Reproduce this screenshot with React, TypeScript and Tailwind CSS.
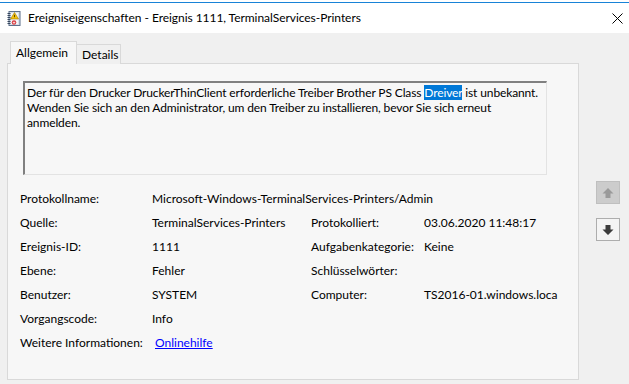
import React from 'react';

const font = { fontFamily: 'Lato, "Noto Sans", sans-serif' };

function TitleIcon() {
  return (
    <svg width="14" height="15" viewBox="0 0 14 15" className="shrink-0">
      <rect x="2" y="0.5" width="11" height="14" fill="#d8e0ea" stroke="#5b6f8a" />
      <rect x="4" y="2" width="7" height="11" fill="#f4f6f9" />
      {[2, 4, 6, 8, 10, 12].map((y) => (
        <rect key={y} x="0.5" y={y} width="3" height="1" fill="#36465e" />
      ))}
      <polygon points="7.5,1.5 11.5,8 3.5,8" fill="#f4c20d" stroke="#a07a00" strokeWidth="0.6" />
      <rect x="7.1" y="3.8" width="0.8" height="2.4" fill="#3a2a00" />
      <circle cx="7" cy="11.5" r="2.3" fill="#d9343a" />
      <rect x="5.8" y="10.8" width="2.4" height="1.6" fill="#f3d0d0" />
    </svg>
  );
}

function ArrowIcon({ dir, color }: { dir: 'up' | 'down'; color: string }) {
  return (
    <svg width="12" height="12" viewBox="0 0 12 12">
      <g transform={dir === 'down' ? 'rotate(180 6 6)' : undefined}>
        <polygon points="6,1 11.5,6.5 8.5,6.5 8.5,11 3.5,11 3.5,6.5 0.5,6.5" fill={color} />
      </g>
    </svg>
  );
}

const rows: [string, React.ReactNode, string?, string?][] = [
  ['Quelle:', 'TerminalServices-Printers', 'Protokolliert:', '03.06.2020 11:48:17'],
  ['Ereignis-ID:', '1111', 'Aufgabenkategorie:', 'Keine'],
  ['Ebene:', 'Fehler', 'Schlüsselwörter:', ''],
  ['Benutzer:', 'SYSTEM', 'Computer:', 'TS2016-01.windows.loca'],
  ['Vorgangscode:', 'Info'],
];

export default function App() {
  return (
    <div className="w-[629px] h-[384px] overflow-hidden bg-[#f0f0f0] text-[12px] text-black" style={font}>
      {/* Title bar */}
      <div className="h-[33px] bg-white flex flex-col">
        <div className="h-[2px]" />
        <div className="h-px bg-[#1883d7]" />
        <div className="flex-1 flex items-center pl-[7px] pr-[6px]">
          <TitleIcon />
          <span className="ml-[7px] text-[12px] tracking-[-0.05px]">Ereigniseigenschaften - Ereignis 1111, TerminalServices-Printers</span>
          <svg width="11" height="11" viewBox="0 0 11 11" className="ml-auto">
            <path d="M0.5 0.5 L10.5 10.5 M10.5 0.5 L0.5 10.5" stroke="#000" strokeWidth="1" />
          </svg>
        </div>
      </div>

      <div className="flex">
        {/* Tab control */}
        <div className="ml-[7px] w-[572px]">
          <div className="mt-[8px] h-[23px] flex items-end pl-[3px]">
            <div className="relative z-10 w-[67px] h-[23px] border border-b-0 border-[#d9d9d9] bg-[#f7f7f7] pl-[5px] pt-[2px]">
              Allgemein
            </div>
            <div className="-ml-px w-[45px] h-[20px] border border-b-0 border-[#d9d9d9] bg-[#f0f0f0] pl-[5px] pt-[1px]">
              Details
            </div>
          </div>
          <div className="-mt-px h-[317px] border border-[#d9d9d9] bg-[#f7f7f7] pl-[12px] pt-[17px]">
            <div className="ml-[3px] w-[524px] h-[94px] border-t-2 border-l-2 border-t-[#808080] border-l-[#808080] border-r border-b border-r-[#e3e3e3] border-b-[#e3e3e3] pl-[2px] pt-[2px] leading-[15px] tracking-[-0.12px]">
              Der für den Drucker DruckerThinClient erforderliche Treiber Brother PS Class{' '}
              <span className="bg-[#0078d7] text-white">Dreiver</span> ist unbekannt. Wenden Sie sich an den Administrator, um den Treiber zu installieren, bevor Sie sich erneut anmelden.
            </div>

            <div className="mt-[12px]">
              <div className="h-[24px] flex items-center">
                <span className="w-[132px]">Protokollname:</span>
                <span>Microsoft-Windows-TerminalServices-Printers/Admin</span>
              </div>
              {rows.map(([l1, v1, l2, v2]) => (
                <div key={l1} className="h-[24px] flex items-center">
                  <span className="w-[132px]">{l1}</span>
                  <span className="w-[159px]">{v1}</span>
                  <span className="w-[113px]">{l2}</span>
                  <span className="w-[140px] whitespace-nowrap">{v2}</span>
                </div>
              ))}
              <div className="h-[24px] flex items-center">
                <span className="w-[135px]">Weitere Informationen:</span>
                <a href="#" className="text-[#0000ff] underline">Onlinehilfe</a>
              </div>
            </div>
          </div>
        </div>

        {/* Navigation buttons */}
        <div className="ml-[17px] pt-[148px] flex flex-col gap-[14px]">
          <div className="w-[24px] h-[23px] border border-[#bfbfbf] bg-[#cccccc] flex items-center justify-center">
            <ArrowIcon dir="up" color="#9a9a9a" />
          </div>
          <div className="w-[24px] h-[23px] border border-[#adadad] bg-[#f4f4f4] flex items-center justify-center">
            <ArrowIcon dir="down" color="#3c3c3c" />
          </div>
        </div>
      </div>
    </div>
  );
}
